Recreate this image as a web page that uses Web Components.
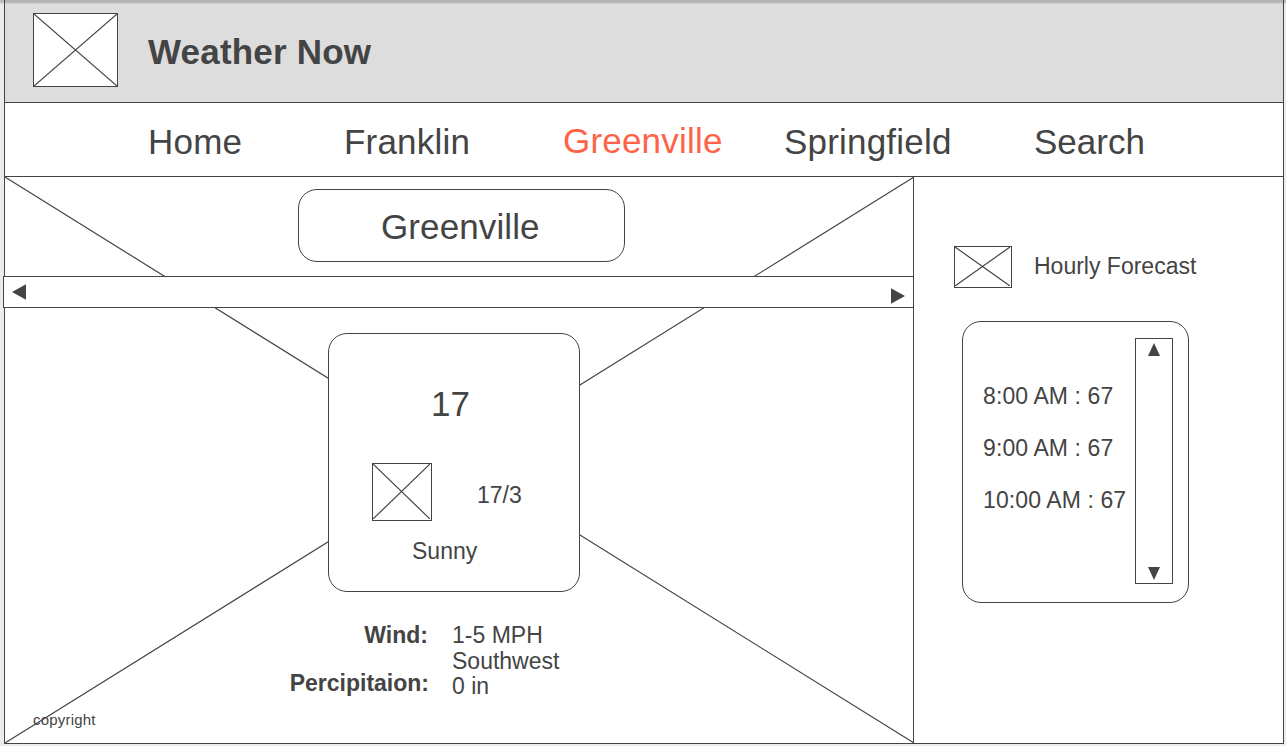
<!DOCTYPE html>
<html lang="en">
<head>
<meta charset="utf-8">
<title>Weather Now</title>
<style>
  body { margin: 0; background: #ebeced; font-family: "Liberation Sans", Arial, sans-serif; color: #444; }
</style>
</head>
<body>
<weather-app></weather-app>
<script>
const define = (name, html) => customElements.define(name, class extends HTMLElement {
  constructor() {
    super();
    this.attachShadow({ mode: 'open' }).innerHTML = html;
  }
});

/* Crossed box standing in for an image */
define('image-placeholder', `
  <style>
    :host { display: block; box-sizing: border-box; border: 1px solid #444; background: #fff; padding: 0 var(--inset, 0px) var(--inset, 0px) 0; }
    svg { display: block; width: 100%; height: 100%; }
    line { stroke: #444; stroke-width: 1.2; }
  </style>
  <svg><line x1="0" y1="0" x2="100%" y2="100%"/><line x1="100%" y1="0" x2="0" y2="100%"/></svg>`);

define('app-header', `
  <style>
    :host { display: flex; height: 102px; box-sizing: border-box; padding: 13px 0 0 28px;
      background: linear-gradient(#b3b3b3 0 2px, #b9b9b9 2px 3px, #d2d2d2 3px 4px, #ddd 4px); }
    image-placeholder { width: 85px; height: 74px; }
    h1 { margin: 19px 0 0 30px; font-size: 35px; line-height: 40px; font-weight: bold; white-space: nowrap; letter-spacing: 0.2px; }
  </style>
  <image-placeholder></image-placeholder><h1><slot></slot></h1>`);

define('nav-bar', `
  <style>
    :host { display: grid; grid-template-columns: 196px 219px 221px 250px auto; height: 75px; box-sizing: border-box;
      padding: 19px 0 0 143px; border-top: 1px solid #444; border-bottom: 1px solid #444;
      font-size: 35px; line-height: 40px; background: #fff; }
  </style><slot></slot>`);

define('nav-item', `
  <style>
    :host { display: block; letter-spacing: 0.2px; }
    :host(:last-child) { letter-spacing: 0; }
    :host([active]) { color: #ff6347; margin-top: -1px; }
  </style><slot></slot>`);

define('rounded-box', `
  <style>
    :host { display: block; box-sizing: border-box; border: 1px solid #444; border-radius: 19px; background: #fff; }
  </style><slot></slot>`);

define('scroll-track', `
  <style>
    :host { display: flex; box-sizing: border-box; justify-content: space-between; border: 1px solid #444; background: #fff; }
    :host([vertical]) { flex-direction: column; align-items: center; padding: 4px 0 3px; }
    :host(:not([vertical])) { padding: 7px 8px 0; }
    svg { display: block; fill: #444; }
    .v, :host([vertical]) .h { display: none; }
    :host([vertical]) .v { display: block; }
    .right { margin-top: 4px; }
  </style>
  <svg class="h" width="14" height="16"><path d="M0 8L14 0.3V15.7Z"/></svg>
  <svg class="h right" width="14" height="16"><path d="M14 8L0 0.3V15.7Z"/></svg>
  <svg class="v" width="12" height="13"><path d="M6 0L12 13H0Z"/></svg>
  <svg class="v" width="12" height="13"><path d="M6 13L12 0H0Z"/></svg>`);

define('current-card', `
  <style>
    :host { display: block; width: 252px; height: 259px; margin: 25px 0 0 323px; font-size: 23px; line-height: 26px; }
    rounded-box { height: 100%; }
    .temp { margin: 50px 0 0 102px; font-size: 35px; line-height: 40px; }
    .row { display: flex; margin: 39px 0 0 43px; }
    image-placeholder { width: 60px; height: 58px; --inset: 1px; }
    .range { margin: 19px 0 0 45px; }
    .sky { margin: 17px 0 0 83px; }
  </style>
  <rounded-box>
    <div class="temp"><slot name="temp"></slot></div>
    <div class="row"><image-placeholder></image-placeholder><div class="range"><slot name="range"></slot></div></div>
    <div class="sky"><slot name="sky"></slot></div>
  </rounded-box>`);

define('weather-details', `
  <style>
    :host { display: grid; grid-template-columns: 424px auto; column-gap: 23px; margin-top: 30px; font-size: 23px; line-height: 26px; }
    .labels { text-align: right; font-weight: bold; }
    .wind { padding-right: 1px; margin-bottom: 22px; }
    .rain { margin-top: -1px; }
  </style>
  <div class="labels"><div class="wind">Wind:</div><div>Percipitaion:</div></div>
  <div><div>1-5 MPH</div><div>Southwest</div><div class="rain">0 in</div></div>`);

define('city-panel', `
  <style>
    :host { display: grid; width: 908px; height: 566px; border-right: 1px solid #444; }
    .backdrop, .content { grid-area: 1 / 1; min-width: 0; min-height: 0; }
    .backdrop { display: block; width: 908px; height: 566px; overflow: visible; }
    line { stroke: #444; stroke-width: 1.2; }
    .content { display: flex; flex-direction: column; }
    .city { width: 327px; height: 73px; margin: 12px 0 0 293px; font-size: 35px; line-height: 40px; }
    .city span { display: block; padding: 17px 0 0 82px; letter-spacing: 0.1px; }
    scroll-track { width: 911px; height: 32px; margin: 14px 0 0 -2px; flex: none; }
    footer { margin: 12px 0 0 28px; font-size: 15px; line-height: 18px; letter-spacing: 0.2px; }
  </style>
  <svg class="backdrop"><line x1="0" y1="0" x2="909" y2="566"/><line x1="909" y1="0" x2="0" y2="566"/></svg>
  <div class="content">
    <rounded-box class="city"><span>Greenville</span></rounded-box>
    <scroll-track></scroll-track>
    <current-card><span slot="temp">17</span><span slot="range">17/3</span><span slot="sky">Sunny</span></current-card>
    <weather-details></weather-details>
    <footer>copyright</footer>
  </div>`);

define('hourly-forecast', `
  <style>
    :host { display: block; padding: 69px 0 0 40px; font-size: 23px; line-height: 26px; }
    .head { display: flex; }
    image-placeholder { width: 58px; height: 42px; --inset: 1px; }
    .head span { margin: 7px 0 0 22px; }
    .list { display: flex; width: 227px; height: 282px; margin: 33px 0 0 8px; justify-content: space-between; padding: 16px 15px 0 20px; }
    ul { list-style: none; margin: 45px 0 0; padding: 0; white-space: nowrap; width: 145px; letter-spacing: 0.1px; }
    li { margin-bottom: 26px; }
    scroll-track { width: 38px; height: 246px; }
  </style>
  <div class="head"><image-placeholder></image-placeholder><span>Hourly Forecast</span></div>
  <rounded-box class="list">
    <ul><li>8:00 AM : 67</li><li>9:00 AM : 67</li><li>10:00 AM : 67</li></ul>
    <scroll-track vertical></scroll-track>
  </rounded-box>`);

define('weather-app', `
  <style>
    :host { display: block; height: 746px; padding: 0 2px 0 4px; box-sizing: border-box; overflow: hidden;
      background: linear-gradient(#bbb 0 2px, #c4c4c4 2px 3px, #dfe0e0 3px 4px, #ebeced 4px); }
    .frame { box-sizing: border-box; width: 1280px; height: 744px; border: 1px solid #444; border-top: 0; background: #fff; }
    main { display: flex; height: 566px; }
    hourly-forecast { flex: 1; }
  </style>
  <div class="frame">
    <app-header>Weather Now</app-header>
    <nav-bar>
      <nav-item>Home</nav-item><nav-item>Franklin</nav-item><nav-item active>Greenville</nav-item><nav-item>Springfield</nav-item><nav-item>Search</nav-item>
    </nav-bar>
    <main><city-panel></city-panel><hourly-forecast></hourly-forecast></main>
  </div>`);
</script>
</body>
</html>
